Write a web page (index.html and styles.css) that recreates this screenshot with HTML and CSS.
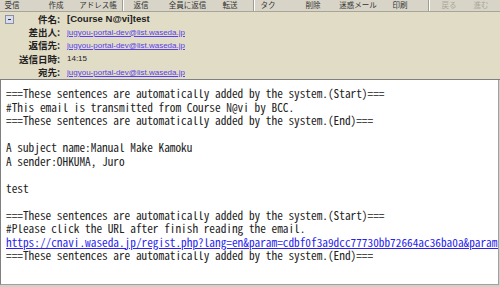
FILE: index.html
```html
<html>
<head>
<meta charset="utf-8">
<title>Course N@vi mail</title>
<link rel="stylesheet" href="styles.css">
</head>
<body>
<div id="window">
<div id="toolbar">
	<span class="btn b1">受信</span>
	<span class="btn b2">作成</span>
	<span class="btn b3">アドレス帳</span>
	<span class="sep s1"></span>
	<span class="btn b4">返信</span>
	<span class="btn b5">全員に返信</span>
	<span class="btn b6">転送</span>
	<span class="sep s2"></span>
	<span class="btn b7">タク</span>
	<span class="btn b8">削除</span>
	<span class="btn b9">迷惑メール</span>
	<span class="btn b10">印刷</span>
	<span class="sep s3"></span>
	<span class="btn b11 off">戻る</span>
	<span class="btn b12 off">進む</span>
</div>
<div id="header">
	<div class="toggle"></div>
	<div class="fields">
		<div class="row"><div class="label">件名:</div><div class="value subject">[Course N@vi]test</div></div>
		<div class="row"><div class="label">差出人:</div><div class="value"><a href="#">jugyou-portal-dev@list.waseda.jp</a></div></div>
		<div class="row"><div class="label">返信先:</div><div class="value"><a href="#">jugyou-portal-dev@list.waseda.jp</a></div></div>
		<div class="row"><div class="label">送信日時:</div><div class="value">14:15</div></div>
		<div class="row"><div class="label">宛先:</div><div class="value"><a href="#">jugyou-portal-dev@list.waseda.jp</a></div></div>
	</div>
</div>
<div id="mailbody">
<pre>===These sentences are automatically added by the system.(Start)===
#This email is transmitted from Course N@vi by BCC.
===These sentences are automatically added by the system.(End)===

A subject name:Manual Make Kamoku
A sender:OHKUMA, Juro

test

===These sentences are automatically added by the system.(Start)===
#Please click the URL after finish reading the email.
<a href="#">https://cnavi.waseda.jp/regist.php?lang=en&amp;param=cdbf0f3a9dcc77730bb72664ac36ba0a&amp;param2=1</a>
===These sentences are automatically added by the system.(End)===</pre>
</div>
</div>
</body>
</html>
```

FILE: styles.css
```css
body{
	margin:0;
	background:#d4d0c8;
}
#window{
	width:500px;
	height:287px;
	overflow:hidden;
}
#toolbar{
	height:11px;
	background:#d8d5c8;
	border-bottom:1px solid #a8a598;
	display:flex;
	overflow:hidden;
	font-family:"Noto Sans CJK JP", sans-serif;
	font-size:7.5px;
	line-height:9px;
	color:#333;
	white-space:nowrap;
}
.btn{
	flex:none;
}
.btn.off{
	color:#aaa79a;
}
.b1{margin-left:4.5px;}
.b2{margin-left:29px;}
.b3{margin-left:15.75px;}
.s1{margin-left:5.25px;}
.b4{margin-left:9.5px;}
.b5{margin-left:20.25px;}
.b6{margin-left:16.25px;}
.s2{margin-left:15.5px;}
.b7{margin-left:5.5px;}
.b8{margin-left:30px;}
.b9{margin-left:18.75px;}
.b10{margin-left:15.75px;}
.s3{margin-left:20.5px;}
.b11{margin-left:11.5px;}
.b12{margin-left:17px;}
.sep{
	flex:none;
	width:1px;
	border-right:1px solid #fff;
	background:#a09d90;
}
#header{
	height:67px;
	background:#e1dcc6;
	border-bottom:1px solid #808080;
	display:flex;
	font-family:"Liberation Sans", "Noto Sans CJK JP", sans-serif;
}
.toggle{
	width:7px;
	height:7px;
	margin:3px 0 0 5px;
	border:1px solid #8a8fa8;
	background:#d8dcec;
	position:relative;
}
.toggle:after{
	content:"";
	position:absolute;
	left:2px;
	top:3px;
	width:3px;
	height:1px;
	background:#333;
}
.fields{
	display:flex;
	flex-direction:column;
}
.row{
	display:flex;
	height:13.4px;
	align-items:center;
}
.label{
	width:46px;
	text-align:right;
	font-family:"Noto Sans CJK JP", sans-serif;
	font-weight:bold;
	font-size:9.5px;
	color:#222;
}
.value{
	margin-left:7px;
	font-size:8px;
	color:#222;
}
.value.subject{
	font-size:9.5px;
	font-weight:bold;
}
.value a{
	color:#5a3ee8;
}
#mailbody{
	height:204px;
	background:#fff;
	border-left:1px solid #808080;
	border-right:1px solid #a0a0a0;
	border-bottom:1px solid #a0a0a0;
	margin-right:1px;
	overflow:hidden;
}
#mailbody pre{
	margin:0;
	padding:7px 0 0 5px;
	font-family:"Noto Sans Mono CJK JP", "Liberation Mono", monospace;
	font-size:11.3px;
	line-height:13.5px;
	color:#222;
	white-space:pre;
}
#mailbody a{
	color:#2b1ff0;
}
```
